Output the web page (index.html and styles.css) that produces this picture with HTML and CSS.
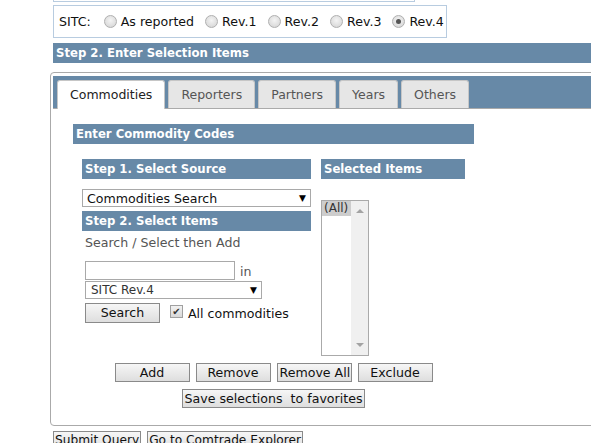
FILE: index.html
```html
<!DOCTYPE html>
<html>
<head>
<meta charset="utf-8">
<link rel="stylesheet" href="styles.css">
</head>
<body>
<div class="page">
  <div class="top-box"></div>
  <div class="sitc-box">
    <span class="sitc-label">SITC:</span>
    <label class="radio-opt"><span class="radio"></span>As reported</label>
    <label class="radio-opt"><span class="radio"></span>Rev.1</label>
    <label class="radio-opt"><span class="radio"></span>Rev.2</label>
    <label class="radio-opt"><span class="radio"></span>Rev.3</label>
    <label class="radio-opt"><span class="radio checked"></span>Rev.4</label>
  </div>
  <div class="bar section-bar">Step 2. Enter Selection Items</div>

  <div class="panel">
    <div class="tabbar">
      <div class="tab active">Commodities</div>
      <div class="tab">Reporters</div>
      <div class="tab">Partners</div>
      <div class="tab">Years</div>
      <div class="tab">Others</div>
    </div>
    <div class="panel-body">
      <div class="bar codes-bar">Enter Commodity Codes</div>
      <div class="selector">
        <div class="cols">
          <div class="col-left">
            <div class="bar">Step 1. Select Source</div>
            <div class="select source-select"><span>Commodities Search</span><span class="arrow">▼</span></div>
            <div class="bar">Step 2. Select Items</div>
            <div class="hint">Search / Select then Add</div>
            <div class="search-row">
              <div class="text-input"></div>
              <span class="in-label">in</span>
            </div>
            <div class="select class-select"><span>SITC Rev.4</span><span class="arrow">▼</span></div>
            <div class="search-actions">
              <div class="btn btn-search">Search</div>
              <span class="checkbox">✔</span>
              <span class="check-label">All commodities</span>
            </div>
          </div>
          <div class="col-right">
            <div class="bar">Selected Items</div>
            <div class="listbox">
              <div class="list-items"><div class="list-item">(All)</div></div>
              <div class="scrollbar">
                <span class="sb-arrow up"></span>
                <span class="sb-arrow down"></span>
              </div>
            </div>
          </div>
        </div>
        <div class="btn-row">
          <div class="btn w75">Add</div>
          <div class="btn w75">Remove</div>
          <div class="btn w75">Remove All</div>
          <div class="btn w75">Exclude</div>
        </div>
        <div class="btn-row save-row">
          <div class="btn btn-save">Save selections&nbsp; to favorites</div>
        </div>
      </div>
    </div>
  </div>

  <div class="bottom-row">
    <div class="btn btn-bottom">Submit Query</div>
    <div class="btn btn-bottom">Go to Comtrade Explorer</div>
  </div>
</div>
</body>
</html>
```
FILE: styles.css
```css
html, body {
  margin: 0;
  padding: 0;
  background: #fff;
  overflow: hidden;
}
body {
  font-family: "DejaVu Sans", Verdana, sans-serif;
  font-size: 12.6px;
  color: #111;
  width: 591px;
  height: 443px;
}
.page {
  padding-left: 53px;
}
.top-box {
  width: 360px;
  height: 1px;
  border: 1px solid #b8cce0;
  border-top: none;
}
.sitc-box {
  margin-top: 3px;
  height: 31px;
  border: 1px solid #b8cce0;
  display: flex;
  align-items: center;
  padding-left: 5px;
  box-sizing: content-box;
  width: 387px;
  white-space: nowrap;
}
.sitc-label {
  margin-right: 13px;
}
.radio-opt {
  display: flex;
  align-items: center;
  margin-right: 11px;
  flex-shrink: 0;
}
.radio {
  display: inline-block;
  width: 11px;
  height: 11px;
  border-radius: 50%;
  border: 1px solid #b0b0b0;
  background: radial-gradient(circle at 50% 40%, #f4f4f4 0%, #dcdcdc 70%, #c8c8c8 100%);
  margin-right: 4px;
  position: relative;
}
.radio.checked::after {
  content: "";
  position: absolute;
  left: 3px;
  top: 3px;
  width: 5px;
  height: 5px;
  border-radius: 50%;
  background: #555;
}
.bar {
  background: #6789a7;
  color: #fff;
  font-weight: bold;
  font-size: 11.7px;
  height: 20px;
  line-height: 20px;
  padding-left: 3px;
  box-sizing: border-box;
  white-space: nowrap;
}
.section-bar {
  margin-top: 5px;
  height: 20px;
}
.panel {
  margin-top: 9px;
  margin-left: -3px;
  width: 600px;
  height: 354px;
  border: 1px solid #aaa;
  border-radius: 4px;
  padding: 3px 0 0 2px;
  box-sizing: border-box;
}
.tabbar {
  background: #6789a7;
  height: 33px;
  border-bottom: 1px solid #aaa;
  display: flex;
  align-items: flex-end;
  padding-left: 4px;
  gap: 3px;
  box-sizing: border-box;
}
.tab {
  height: 28px;
  line-height: 28px;
  padding: 0 12px;
  background: #e6e6e6;
  border: 1px solid #c6c6c6;
  border-bottom: none;
  border-radius: 3px 3px 0 0;
  color: #555;
  box-sizing: border-box;
  font-size: 12.5px;
}
.tab.active {
  background: #fff;
  color: #222;
  height: 29px;
  margin-bottom: -1px;
}
.panel-body {
  padding-top: 15px;
}
.codes-bar {
  margin-left: 20px;
  width: 401px;
}
.selector {
  margin-left: 29px;
  width: 383px;
  margin-top: 15px;
}
.cols {
  display: flex;
  gap: 10px;
}
.col-left {
  width: 229px;
  display: flex;
  flex-direction: column;
}
.col-right {
  width: 144px;
}
.select {
  border: 1px solid #a9a9a9;
  height: 18px;
  box-sizing: border-box;
  display: flex;
  align-items: center;
  justify-content: space-between;
  padding: 0 4px 0 4px;
  background: #fff;
}
.select .arrow {
  font-size: 9px;
  color: #000;
}
.source-select {
  margin-top: 10px;
  margin-bottom: 4px;
}
.hint {
  color: #555;
  margin-top: 4px;
  margin-left: 3px;
  height: 18px;
}
.search-row {
  display: flex;
  align-items: flex-end;
  margin-top: 8px;
  margin-left: 3px;
}
.text-input {
  width: 150px;
  height: 19px;
  border: 1px solid #a9a9a9;
  box-sizing: border-box;
}
.in-label {
  color: #555;
  margin-left: 5px;
  line-height: 16px;
}
.class-select {
  margin-left: 3px;
  width: 177px;
  margin-top: 1px;
  color: #333;
  padding-left: 5px;
  font-size: 12px;
}
.search-actions {
  display: flex;
  align-items: center;
  margin-left: 3px;
  margin-top: 4px;
}
.checkbox {
  width: 11px;
  height: 11px;
  border: 1px solid #a0a0a0;
  background: linear-gradient(#f2f2f2, #d8d8d8);
  font-size: 10px;
  line-height: 11px;
  text-align: center;
  color: #333;
  margin-left: 10px;
  margin-right: 5px;
  margin-top: -4px;
}
.check-label {
  color: #111;
}
.listbox {
  margin-top: 21px;
  width: 48px;
  height: 156px;
  border: 1px solid #aaa;
  box-sizing: border-box;
  display: flex;
}
.list-items {
  flex: 1;
}
.list-item {
  background: #cdcdcd;
  color: #333;
  height: 15px;
  line-height: 15px;
  padding-left: 2px;
  font-size: 12px;
}
.scrollbar {
  width: 17px;
  background: #f0f0f0;
  display: flex;
  flex-direction: column;
  justify-content: space-between;
  align-items: center;
  padding: 8px 0 8px;
  box-sizing: border-box;
}
.sb-arrow {
  width: 0;
  height: 0;
  border-left: 4px solid transparent;
  border-right: 4px solid transparent;
}
.sb-arrow.up {
  border-bottom: 4px solid #a3a3a3;
}
.sb-arrow.down {
  border-top: 4px solid #a3a3a3;
}
.btn {
  background: linear-gradient(#f6f6f6, #dedede);
  border: 1px solid #8a8a8a;
  height: 19px;
  line-height: 17px;
  box-sizing: border-box;
  text-align: center;
  color: #111;
  white-space: nowrap;
  padding: 0 2px;
}
.btn-search {
  width: 75px;
  height: 20px;
}
.w75 {
  width: 75px;
}
.btn-row {
  display: flex;
  justify-content: center;
  gap: 6px;
  margin-top: 7px;
}
.save-row {
  margin-top: 7px;
}
.btn-bottom {
  padding: 0 1px;
  height: 20px;
  font-size: 12.2px;
}
.bottom-row {
  display: flex;
  gap: 6px;
  margin-top: 5px;
}
```
